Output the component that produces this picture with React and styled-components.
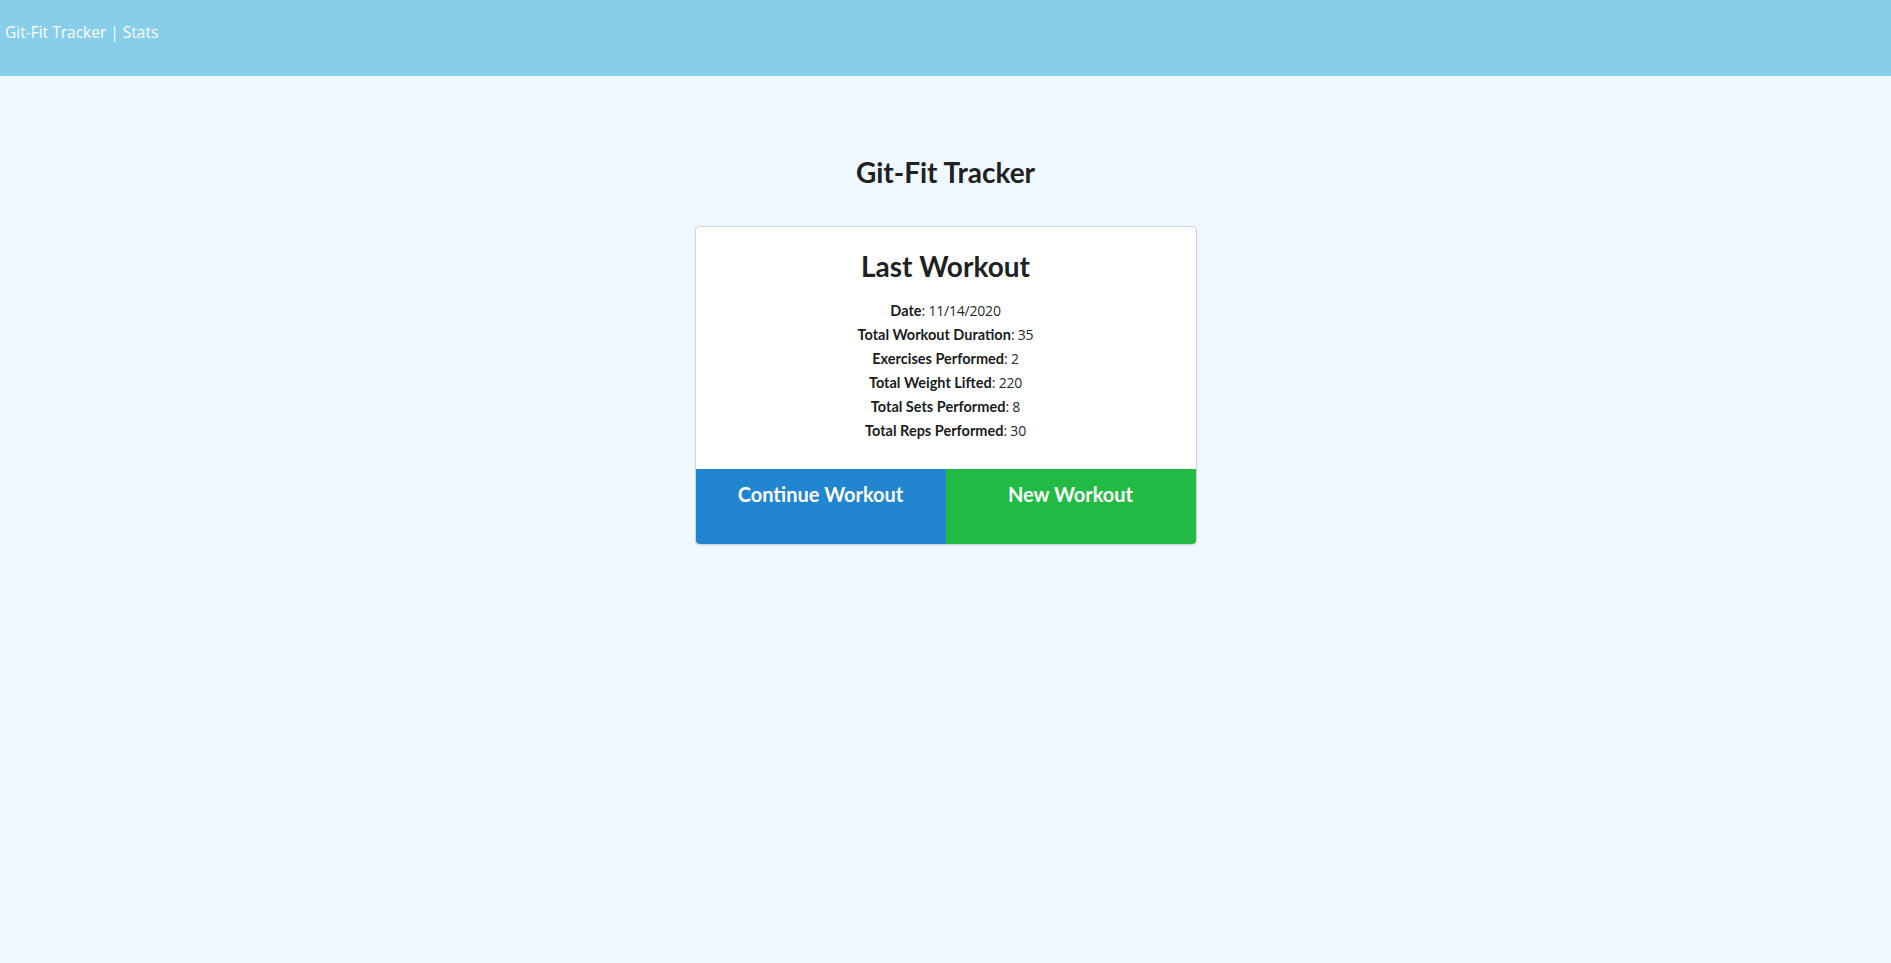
import React from "react";
import styled, { createGlobalStyle } from "styled-components";

const GlobalStyle = createGlobalStyle`
  html, body { margin: 0; padding: 0; }
  body {
    background: #f0f8ff;
    font-family: "Open Sans", "Noto Sans", sans-serif;
    color: rgba(0, 0, 0, 0.87);
    min-height: 963px;
  }
`;

const Page = styled.div`
  min-height: 963px;
  background: #f0f8ff;
  display: flex;
  flex-direction: column;
`;

const Header = styled.header`
  height: 76px;
  box-sizing: border-box;
  background: #87ceeb;
  padding: 20px 0 0 5px;
  color: #ffffff;
  font-family: "Open Sans", "Noto Sans", sans-serif;
  font-size: 15.5px;
  line-height: 24px;
`;

const Main = styled.main`
  display: flex;
  flex-direction: column;
  align-items: center;
  padding-top: 80px;
`;

const Title = styled.h1`
  margin: 0 0 37px;
  font-family: Lato, "Liberation Sans", sans-serif;
  font-weight: 700;
  font-size: 28px;
  line-height: 1.2;
  color: #212121;
`;

const Card = styled.div`
  width: 500px;
  box-sizing: border-box;
  background: #ffffff;
  border-radius: 4px;
  box-shadow: 0 1px 3px 0 #d4d4d5, 0 0 0 1px #d4d4d5;
  display: flex;
  flex-direction: column;
  overflow: hidden;
`;

const Content = styled.div`
  padding: 23px 16px 26px;
  display: flex;
  flex-direction: column;
  align-items: center;
`;

const CardTitle = styled.h2`
  margin: 0 0 16px;
  font-family: Lato, "Liberation Sans", sans-serif;
  font-weight: 700;
  font-size: 28px;
  line-height: 1.2;
  color: #212121;
`;

const StatRow = styled.div`
  font-family: Lato, "Liberation Sans", sans-serif;
  font-size: 14.5px;
  line-height: 24px;
  height: 24px;
  color: #1b1c1d;
  text-align: center;
`;

const Label = styled.strong`
  font-weight: 700;
`;

const Value = styled.span`
  font-family: "Open Sans", "Noto Sans", sans-serif;
  font-size: 14px;
  font-weight: 400;
  letter-spacing: -0.2px;
  color: #2a2a2a;
`;

const Buttons = styled.div`
  display: grid;
  grid-template-columns: 1fr 1fr;
`;

const Button = styled.button`
  height: 75px;
  border: none;
  margin: 0;
  padding: 13px 0 0;
  display: flex;
  justify-content: center;
  align-items: flex-start;
  background: ${(p) => p.$bg};
  color: #ffffff;
  font-family: Lato, "Liberation Sans", sans-serif;
  font-weight: 700;
  font-size: 20px;
  line-height: 24px;
  cursor: pointer;
`;

const stats = [
  ["Date", "11/14/2020"],
  ["Total Workout Duration", "35"],
  ["Exercises Performed", "2"],
  ["Total Weight Lifted", "220"],
  ["Total Sets Performed", "8"],
  ["Total Reps Performed", "30"],
];

export default function App() {
  return (
    <>
      <GlobalStyle />
      <Page>
        <Header>Git-Fit Tracker | Stats</Header>
        <Main>
          <Title>Git-Fit Tracker</Title>
          <Card>
            <Content>
              <CardTitle>Last Workout</CardTitle>
              {stats.map(([label, value]) => (
                <StatRow key={label}>
                  <Label>{label}</Label>
                  <Value>: {value}</Value>
                </StatRow>
              ))}
            </Content>
            <Buttons>
              <Button $bg="#2185d0">Continue Workout</Button>
              <Button $bg="#21ba45">New Workout</Button>
            </Buttons>
          </Card>
        </Main>
      </Page>
    </>
  );
}
